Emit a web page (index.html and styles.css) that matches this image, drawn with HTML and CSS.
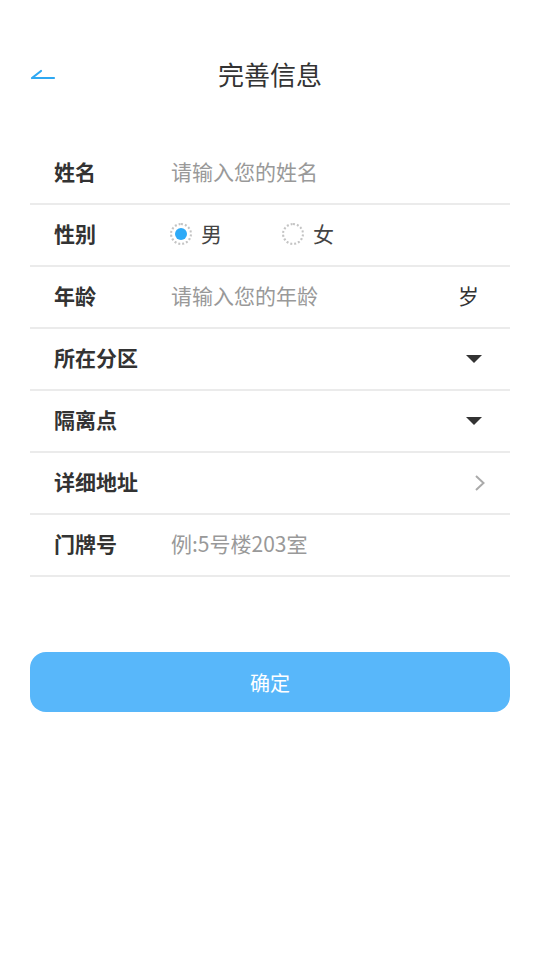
FILE: index.html
```html
<!DOCTYPE html>
<html lang="zh">
<head>
<meta charset="utf-8">
<link rel="stylesheet" href="styles.css">
</head>
<body>
<div class="page">
  <header class="nav">
    <svg class="back" width="26" height="12" viewBox="0 0 26 12"><path d="M2 10 L24 10 M2 10 L11 3" stroke="#2ea8f2" stroke-width="2.2" fill="none" stroke-linecap="round"/></svg>
    <h1 class="title">完善信息</h1>
  </header>
  <div class="form">
    <div class="row"><span class="label">姓名</span><span class="ph">请输入您的姓名</span></div>
    <div class="row">
      <span class="label">性别</span>
      <span class="radio-group">
        <span class="radio"><span class="dot on"></span><span class="rtext">男</span></span>
        <span class="radio"><span class="dot"></span><span class="rtext">女</span></span>
      </span>
    </div>
    <div class="row"><span class="label">年龄</span><span class="ph grow">请输入您的年龄</span><span class="unit">岁</span></div>
    <div class="row"><span class="label grow">所在分区</span><span class="tri"></span></div>
    <div class="row"><span class="label grow">隔离点</span><span class="tri"></span></div>
    <div class="row"><span class="label grow">详细地址</span>
      <svg class="chev" width="12" height="18" viewBox="0 0 12 18"><path d="M2 2 L9.5 9 L2 16" stroke="#aaaaaa" stroke-width="2" fill="none"/></svg>
    </div>
    <div class="row"><span class="label">门牌号</span><span class="ph">例:5号楼203室</span></div>
  </div>
  <button class="submit">确定</button>
</div>
</body>
</html>
```
FILE: styles.css
```css
* { box-sizing: border-box; }
html, body { margin: 0; padding: 0; background: #fff; }
body { font-family: "Noto Sans CJK SC", "Noto Sans", sans-serif; color: #333; }
.page { width: 540px; height: 960px; padding: 0 30px; }
.nav { position: relative; height: 150px; padding-top: 51px; display: flex; justify-content: center; }
.back { position: absolute; left: 0; top: 68px; }
.title { margin: 0; font-size: 26px; font-weight: 400; line-height: 46px; color: #333; }
.form { margin-top: -7px; }
.row { height: 62px; border-bottom: 2px solid #ebebeb; display: flex; align-items: center; padding: 0 30px 4px 24px; font-size: 21px; }
.label { width: 117px; font-weight: 700; color: #333; flex-shrink: 0; }
.ph { color: #999; }
.grow { flex: 1; }
.unit { color: #333; margin-right: 1px; }
.radio-group { display: flex; }
.radio { display: flex; align-items: center; width: 112px; }
.dot { width: 22px; height: 22px; border-radius: 50%; border: 2px dotted #c4c4c4; display: flex; align-items: center; justify-content: center; margin-left: -1px; margin-top: 2px; }
.dot.on::after { content: ""; width: 12px; height: 12px; border-radius: 50%; background: #2eaaf7; }
.rtext { margin-left: 9px; color: #444; }
.tri { width: 0; height: 0; border-left: 8px solid transparent; border-right: 8px solid transparent; border-top: 8px solid #333; margin-right: -2px; margin-top: 4px; }
.chev { margin-right: -6px; margin-top: 3px; }
.submit { display: block; width: 480px; height: 60px; margin-top: 75px; border: none; border-radius: 16px; background: #58b7fa; color: #fff; font-family: "Noto Sans CJK SC", sans-serif; font-size: 20px; }
```
